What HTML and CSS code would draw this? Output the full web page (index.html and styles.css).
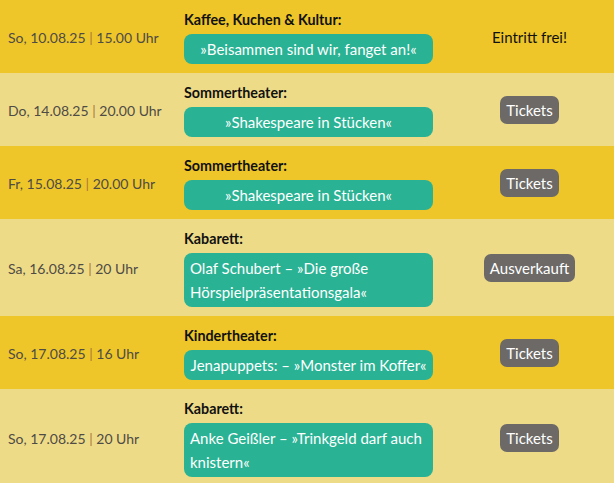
FILE: index.html
```html
<!DOCTYPE html>
<html lang="de">
<head>
<meta charset="utf-8">
<link rel="stylesheet" href="styles.css">
</head>
<body>
<div class="list">
  <div class="row dark">
    <div class="date">So, 10.08.25 <span class="sep">|</span> 15.00 Uhr</div>
    <div class="event">
      <div class="cat">Kaffee, Kuchen &amp; Kultur:</div>
      <a class="title">»Beisammen sind wir, fanget an!«</a>
    </div>
    <div class="action"><span class="free">Eintritt frei!</span></div>
  </div>
  <div class="row light">
    <div class="date">Do, 14.08.25 <span class="sep">|</span> 20.00 Uhr</div>
    <div class="event">
      <div class="cat">Sommertheater:</div>
      <a class="title">»Shakespeare in Stücken«</a>
    </div>
    <div class="action"><a class="pill">Tickets</a></div>
  </div>
  <div class="row dark">
    <div class="date">Fr, 15.08.25 <span class="sep">|</span> 20.00 Uhr</div>
    <div class="event">
      <div class="cat">Sommertheater:</div>
      <a class="title">»Shakespeare in Stücken«</a>
    </div>
    <div class="action"><a class="pill">Tickets</a></div>
  </div>
  <div class="row light">
    <div class="date">Sa, 16.08.25 <span class="sep">|</span> 20 Uhr</div>
    <div class="event">
      <div class="cat">Kabarett:</div>
      <a class="title">Olaf Schubert – »Die große Hörspielpräsentationsgala«</a>
    </div>
    <div class="action"><a class="pill">Ausverkauft</a></div>
  </div>
  <div class="row dark">
    <div class="date">So, 17.08.25 <span class="sep">|</span> 16 Uhr</div>
    <div class="event">
      <div class="cat">Kindertheater:</div>
      <a class="title">Jenapuppets: – »Monster im Koffer«</a>
    </div>
    <div class="action"><a class="pill">Tickets</a></div>
  </div>
  <div class="row light">
    <div class="date">So, 17.08.25 <span class="sep">|</span> 20 Uhr</div>
    <div class="event">
      <div class="cat">Kabarett:</div>
      <a class="title">Anke Geißler – »Trinkgeld darf auch knistern«</a>
    </div>
    <div class="action"><a class="pill">Tickets</a></div>
  </div>
</div>
</body>
</html>
```

FILE: styles.css
```css
html, body {
  margin: 0;
  padding: 0;
}
body {
  font-family: Lato, "Open Sans", sans-serif;
  font-size: 15px;
  background: #eedb88;
}
.list {
  display: flex;
  flex-direction: column;
}
.row {
  display: grid;
  grid-template-columns: 176px 249px 1fr;
  column-gap: 0;
  padding: 10px 0 9px 8px;
  align-items: center;
}
.dark { background: #eec62a; }
.light { background: #eedb88; }
.date {
  color: #4f4b45;
  font-size: 14px;
}
.sep { color: #a8783a; }
.event {
  display: flex;
  flex-direction: column;
}
.cat {
  font-weight: 700;
  font-size: 14.3px;
  color: #111;
  line-height: 20px;
  margin-bottom: 4px;
}
.title {
  display: flex;
  justify-content: center;
  background: #29b293;
  color: #fff;
  border-radius: 8px;
  padding: 3px 6px;
  line-height: 24px;
}
.action {
  display: flex;
  justify-content: center;
  padding-left: 12px;
}
.free { color: #111; }
.pill {
  background: #6c6966;
  color: #fff;
  border-radius: 7px;
  padding: 0 6px;
  line-height: 28px;
}
```
